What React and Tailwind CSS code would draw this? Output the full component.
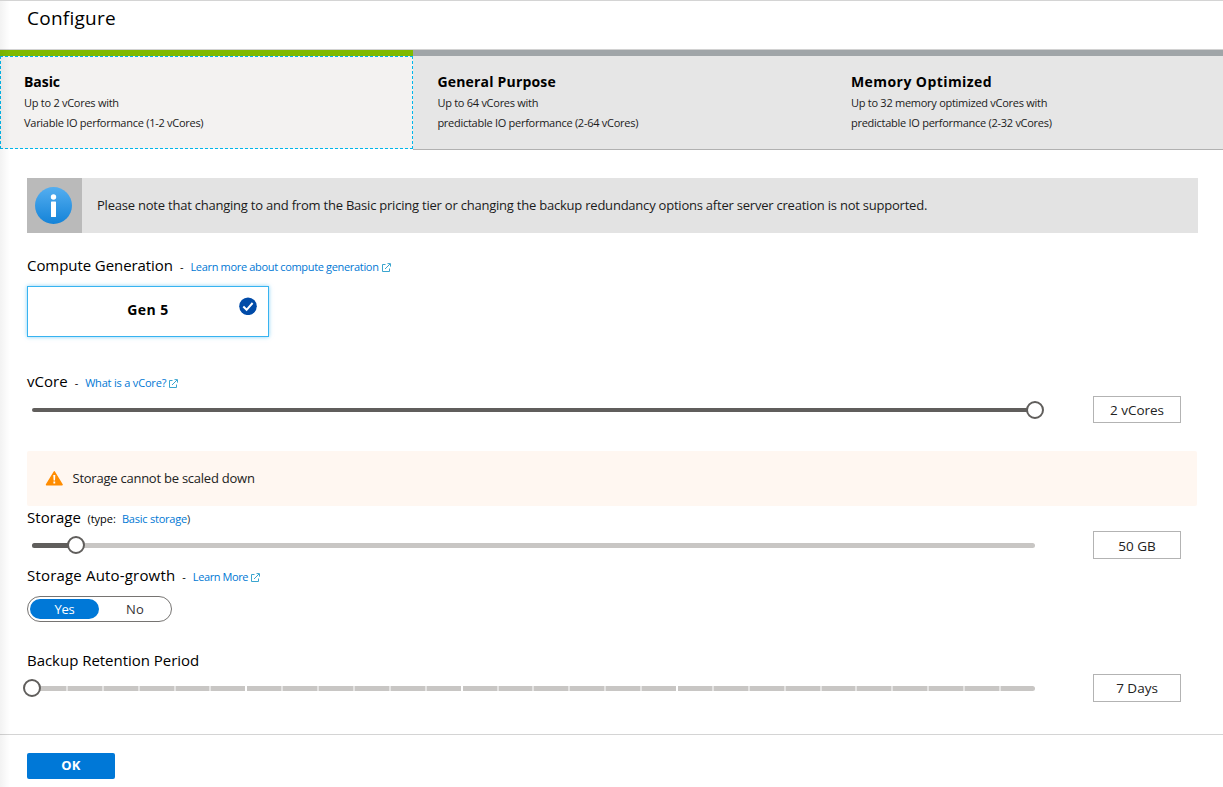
function ExternalIcon() {
  return (
    <svg viewBox="0 0 9 9" className="ml-[3px] h-[9px] w-[9px] shrink-0" fill="none" stroke="#3aa5cf" strokeWidth="1">
      <path d="M3.5 1.5h-3v7h7v-3M3 6l5-5M5.5.6h3v3" />
    </svg>
  );
}

function Heading({ children, label, labelClass }) {
  return (
    <div className="flex h-5 items-center whitespace-nowrap text-[11px] leading-5 text-black">
      <h2 className={`pb-0.5 text-[15px] font-normal leading-5 ${labelClass}`}>{label}</h2>
      {children}
    </div>
  );
}

function DocLink({ children, className }) {
  return (
    <a href="#" className={`flex items-center pt-0.5 text-[#0078d4] ${className}`}>
      {children}
    </a>
  );
}

function Dash() {
  return <span className="ml-[7px] w-[10.5px] pt-0.5">-</span>;
}

function ValueBox({ children, className }) {
  return (
    <div className={`ml-[58px] h-full w-[88px] border border-[#b3b3b3] text-center text-[13.5px] leading-[26px] text-[#222] ${className}`}>
      {children}
    </div>
  );
}

function Thumb({ className }) {
  return <span className={`absolute h-[18px] w-[18px] rounded-full border-2 border-[#605e5c] bg-white ${className}`} />;
}

const tiers = [
  { name: "Basic", nameClass: "-tracking-[0.06px]", lines: ["Up to 2 vCores with", "Variable IO performance (1-2 vCores)"], active: true },
  { name: "General Purpose", nameClass: "tracking-[0.19px]", lines: ["Up to 64 vCores with", "predictable IO performance (2-64 vCores)"] },
  { name: "Memory Optimized", nameClass: "tracking-[0.43px]", lines: ["Up to 32 memory optimized vCores with", "predictable IO performance (2-32 vCores)"] },
];

const segments = Array.from({ length: 28 }, (_, i) => i + 1);

function segmentClass(n) {
  if (n === 28) return "flex-1";
  if (n % 6 === 0 && n < 24) return "flex-1 border-r-2 border-white";
  return "flex-1 border-r-2 border-[#e4e3e2]";
}

export default function App() {
  return (
    <div className="relative h-[787px] w-[1223px] overflow-hidden border-t border-[#d4d4d4] bg-white font-['Open_Sans','Noto_Sans',sans-serif] text-black">
      <header className="h-[49px] border-b border-[#d2d2d2] pl-[27px]">
        <h1 className="pt-1 text-[19px] font-normal leading-[26px] tracking-[0.25px]">Configure</h1>
      </header>

      <div className="grid h-[100px] grid-cols-[413px_413.6px_1fr]">
        {tiers.map((t) => (
          <section key={t.name} className={t.active ? "border-t-[6px] border-[#7fba00] pb-px" : "border-t-[6px] border-[#a0a5a8]"}>
            <div
              className={
                t.active
                  ? "h-full border border-dashed border-[#00b7eb] bg-[#f3f2f1] pl-[23px] pt-[15px]"
                  : "h-full border-b border-[#b1b1b1] bg-[#e6e6e6] pl-[24.4px] pt-4"
              }
            >
              <h2 className={`text-[14px] font-bold leading-5 ${t.nameClass}`}>{t.name}</h2>
              {t.lines.map((l) => (
                <p key={l} className="whitespace-nowrap pt-px text-[11px] leading-[19px] -tracking-[0.27px] text-[#1b1b1b]">{l}</p>
              ))}
            </div>
          </section>
        ))}
      </div>

      <main className="pl-[27px]">
        <div className="mt-7 flex h-[55px] w-[1171px] items-center bg-[#e3e3e3]">
          <div className="flex h-full w-[55px] items-center justify-center bg-[#bababa]">
            <svg viewBox="0 0 37 37" className="-ml-0.5 h-[37px] w-[37px]">
              <defs>
                <linearGradient id="info" x1="0" y1="0" x2="0" y2="1">
                  <stop offset="0" stopColor="#54aef0" />
                  <stop offset="1" stopColor="#1483d8" />
                </linearGradient>
              </defs>
              <circle cx="18.5" cy="18.5" r="18.5" fill="url(#info)" />
              <circle cx="18.5" cy="10" r="2.7" fill="#fff" />
              <rect x="16" y="14.5" width="5" height="15.5" rx=".6" fill="#fff" />
            </svg>
          </div>
          <p className="ml-[15px] whitespace-nowrap text-[13px] -tracking-[0.22px] text-[#1b1b1b]">
            Please note that changing to and from the Basic pricing tier or changing the backup redundancy options after server creation is not supported.
          </p>
        </div>

        <div className="mt-[23px]">
          <Heading label="Compute Generation" labelClass="-tracking-[0.07px]">
            <Dash />
            <DocLink className="-tracking-[0.33px]">Learn more about compute generation<ExternalIcon /></DocLink>
          </Heading>
        </div>
        <button className="mt-[10px] grid h-[51px] w-[242px] grid-cols-[1fr_auto_1fr] border border-[#37b3f0] shadow-[0_0_4px_#37b3f099]">
          <span />
          <span className="mt-[13px] text-[14px] font-bold leading-5 tracking-[0.45px]">Gen 5</span>
          <svg viewBox="0 0 18 18" className="mr-[11px] mt-[10px] h-[18px] w-[18px] justify-self-end">
            <circle cx="9" cy="9.3" r="8.8" fill="#004ba8" />
            <path d="M4.3 9.5l3.3 3.3 6-6.8" fill="none" stroke="#fff" strokeWidth="2" />
          </svg>
        </button>

        <div className="mt-[35px]">
          <Heading label="vCore" labelClass="tracking-[0.02px]">
            <Dash />
            <DocLink className="-tracking-[0.19px]">What is a vCore?<ExternalIcon /></DocLink>
          </Heading>
        </div>
        <div className="mt-1 flex h-[27px]">
          <div className="relative ml-[5px] mt-3 h-1 w-[1003px] rounded-full bg-[#605e5c]">
            <Thumb className="-top-[7px] left-[993.5px]" />
          </div>
          <ValueBox>2 vCores</ValueBox>
        </div>

        <div className="mt-7 flex h-[55px] w-[1170px] items-center rounded-[2px] bg-[#fff7f1]">
          <svg viewBox="0 0 18 16" className="ml-[18px] h-4 w-[18px]">
            <path d="M9.3 .8L17.1 13.7H1.5z" fill="#ff8c00" stroke="#ff8c00" strokeWidth="1.4" strokeLinejoin="round" />
            <path d="M8.3 4.1h2l-.3 5.5H8.6zM8.4 10.5h1.8v1.9H8.4z" fill="#fff" />
          </svg>
          <p className="ml-[9.5px] text-[13px] -tracking-[0.24px] text-[#222]">Storage cannot be scaled down</p>
        </div>

        <div className="mt-0.5">
          <Heading label="Storage" labelClass="tracking-[0.04px]">
            <span className="ml-[6.5px] w-[34.5px] pt-0.5">(type:</span>
            <DocLink className="-tracking-[0.22px]">Basic storage<span className="text-[#333]">)</span></DocLink>
          </Heading>
        </div>
        <div className="mt-[3px] flex h-7">
          <div className="relative ml-[5px] mt-3 h-[5px] w-[1003px] rounded-full bg-[#c8c6c4]">
            <div className="h-full w-11 rounded-l-full bg-[#605e5c]" />
            <Thumb className="-top-[7px] left-[35px]" />
          </div>
          <ValueBox className="pt-px">50 GB</ValueBox>
        </div>

        <div className="mt-[7px]">
          <Heading label="Storage Auto-growth" labelClass="tracking-[0.18px]">
            <Dash />
            <DocLink className="-tracking-[0.4px]">Learn More<ExternalIcon /></DocLink>
          </Heading>
        </div>
        <div className="mt-[10px] flex h-[26px] w-[145px] rounded-full border border-[#767472] p-0.5 text-center text-[13px] leading-5">
          <span className="w-[69px] rounded-full bg-[#0078d7] -tracking-[0.2px] text-white">Yes</span>
          <span className="flex-1 pl-0.5 text-[#333] tracking-[0.2px]">No</span>
        </div>

        <div className="mt-[29px]">
          <Heading label="Backup Retention Period" labelClass="-tracking-[0.03px]" />
        </div>
        <div className="mt-[3px] flex h-7">
          <div className="relative ml-[5px] mt-3 h-[5px] w-[1003px]">
            <div className="flex h-full overflow-hidden rounded-full bg-[#c8c6c4]">
              {segments.map((n) => (
                <span key={n} className={segmentClass(n)} />
              ))}
            </div>
            <Thumb className="-left-[9px] -top-[7px]" />
          </div>
          <ValueBox>7 Days</ValueBox>
        </div>
      </main>

      <footer className="mt-8 border-t border-[#d4d4d4] pl-[27px] pt-[18px]">
        <button className="block h-[26px] w-[88px] rounded-[2px] bg-[#0078d7] pb-0.5 text-[13px] font-bold leading-6 tracking-[0.26px] text-white">OK</button>
      </footer>
      <div className="pointer-events-none absolute inset-y-0 left-0 w-[10px] bg-linear-to-r from-black/5 to-transparent" />
    </div>
  );
}
